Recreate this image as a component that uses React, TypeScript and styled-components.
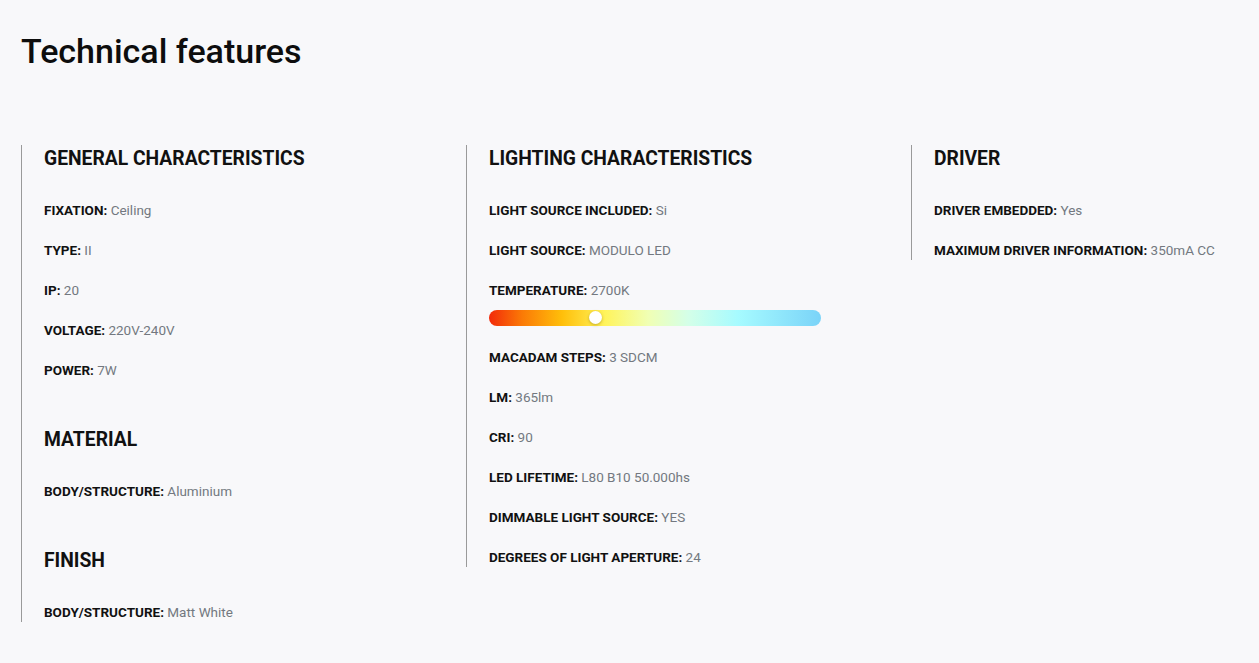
import styled, { createGlobalStyle } from 'styled-components';

type Spec = { label: string; value: string; scale?: number };
type Group = { title: string; items: Spec[] };

const columns: Group[][] = [
	[
		{
			title: 'GENERAL CHARACTERISTICS',
			items: [
				{ label: 'FIXATION', value: 'Ceiling' },
				{ label: 'TYPE', value: 'II' },
				{ label: 'IP', value: '20' },
				{ label: 'VOLTAGE', value: '220V-240V' },
				{ label: 'POWER', value: '7W' },
			],
		},
		{ title: 'MATERIAL', items: [{ label: 'BODY/STRUCTURE', value: 'Aluminium' }] },
		{ title: 'FINISH', items: [{ label: 'BODY/STRUCTURE', value: 'Matt White' }] },
	],
	[
		{
			title: 'LIGHTING CHARACTERISTICS',
			items: [
				{ label: 'LIGHT SOURCE INCLUDED', value: 'Si' },
				{ label: 'LIGHT SOURCE', value: 'MODULO LED' },
				{ label: 'TEMPERATURE', value: '2700K', scale: 32 },
				{ label: 'MACADAM STEPS', value: '3 SDCM' },
				{ label: 'LM', value: '365lm' },
				{ label: 'CRI', value: '90' },
				{ label: 'LED LIFETIME', value: 'L80 B10 50.000hs' },
				{ label: 'DIMMABLE LIGHT SOURCE', value: 'YES' },
				{ label: 'DEGREES OF LIGHT APERTURE', value: '24' },
			],
		},
	],
	[
		{
			title: 'DRIVER',
			items: [
				{ label: 'DRIVER EMBEDDED', value: 'Yes' },
				{ label: 'MAXIMUM DRIVER INFORMATION', value: '350mA CC' },
			],
		},
	],
];

const App = () => {
	return (
		<>
			<GlobalStyle />
			<StyledPage>
				<StyledTitle>Technical features</StyledTitle>
				<StyledGrid>
					{columns.map((groups, i) => (
						<StyledColumn key={i}>
							{groups.map((group) => (
								<StyledSection key={group.title}>
									<StyledHeading>{group.title}</StyledHeading>
									<StyledList>
										{group.items.map((item) => (
											<StyledItem key={item.label}>
												<StyledLine>
													<StyledLabel>{item.label}:</StyledLabel> <StyledValue>{item.value}</StyledValue>
												</StyledLine>
												{item.scale !== undefined && (
													<StyledScale>
														<StyledKnob style={{ left: `${item.scale}%` }} />
													</StyledScale>
												)}
											</StyledItem>
										))}
									</StyledList>
								</StyledSection>
							))}
						</StyledColumn>
					))}
				</StyledGrid>
			</StyledPage>
		</>
	);
};

export default App;

const GlobalStyle = createGlobalStyle`
	html, body {
		margin: 0;
		background: #f8f8fa;
		font-family: Roboto, 'Liberation Sans', sans-serif;
		color: #111;
	}
`;

const StyledPage = styled.div`
	padding: 31px 21px 40px;
	min-height: 663px;
	box-sizing: border-box;
`;

const StyledTitle = styled.h1`
	margin: 0;
	font-size: 34px;
	line-height: 41px;
	font-weight: 500;
	color: #0d0d0d;
`;

const StyledGrid = styled.div`
	display: grid;
	grid-template-columns: 445px 445px 1fr;
	align-items: start;
	margin-top: 73px;
`;

const StyledColumn = styled.div`
	border-left: 1px solid #9a9a9a;
	padding-left: 22px;
	display: flex;
	flex-direction: column;
	gap: 46px;
`;

const StyledSection = styled.section`
	display: flex;
	flex-direction: column;
`;

const StyledHeading = styled.h3`
	margin: 0 0 27px;
	font-size: 19.3px;
	line-height: 28px;
	font-weight: 700;
	color: #111;
`;

const StyledList = styled.div`
	display: flex;
	flex-direction: column;
	gap: 20px;
`;

const StyledItem = styled.div`
	display: flex;
	flex-direction: column;
`;

const StyledLine = styled.div`
	font-size: 13.5px;
	line-height: 20px;
`;

const StyledLabel = styled.span`
	font-weight: 700;
	color: #111;
`;

const StyledValue = styled.span`
	color: #737880;
`;

const StyledScale = styled.div`
	position: relative;
	margin: 10px 0 1px;
	width: 332px;
	height: 16px;
	border-radius: 8px;
	background: linear-gradient(
		90deg,
		#f22a0a 0%,
		#fb7a06 10%,
		#ffbf0a 22%,
		#fff45c 35%,
		#f0ffb4 48%,
		#d4ffe8 60%,
		#a6fbff 75%,
		#7ad3f8 100%
	);
`;

const StyledKnob = styled.span`
	position: absolute;
	top: 1px;
	width: 13px;
	height: 13px;
	margin-left: -6px;
	border-radius: 50%;
	background: #fff;
	box-shadow: 0 1px 3px rgba(120, 100, 0, 0.45);
`;
